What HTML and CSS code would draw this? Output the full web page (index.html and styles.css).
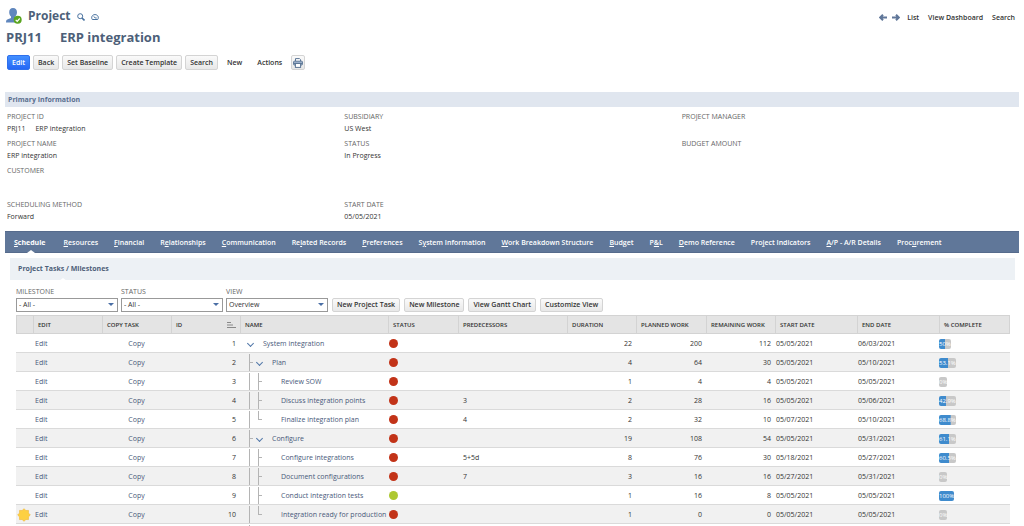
FILE: index.html
```html
<!DOCTYPE html>
<html lang="en">
<head>
<meta charset="utf-8">
<title>Project - ERP integration</title>
<link rel="stylesheet" href="styles.css">
</head>
<body>
<header class="page-head">
  <div class="brand">
    <svg class="person" viewBox="0 0 16 16" aria-hidden="true"><path fill="#5f86bd" d="M7 0c2.700 0 4 1.800 4 4.200 0 1.800-.8 3.300-1.800 4.200v1.400L14 12v2.500H0c0-2.500.7-3 2.500-3.600L5 9.900V8.400C3.900 7.500 3.200 6 3.200 4.200 3.200 1.800 4.400 0 7 0z"/><circle cx="11.700" cy="11.800" r="4" fill="#5aa520"/><path fill="none" stroke="#fff" stroke-width="1.200" d="M9.700 11.900l1.500 1.500 2.500-2.900"/></svg>
    <h1 class="record-type">Project</h1>
    <button class="icon-btn" aria-label="Find"><svg viewBox="0 0 8 8"><circle cx="3.200" cy="3.200" r="2.500"/><path d="M5 5l2.500 2.500" stroke-width="1.600"/></svg></button>
    <button class="icon-btn" aria-label="Dashboard"><svg viewBox="0 0 8 8"><path d="M1.300 6.500C-.2 4.300 1.200 1.600 4 1.600s4.200 2.700 2.700 4.900zM4.200 5L2.800 3.400M4.200 5h1.500"/></svg></button>
  </div>
  <nav class="record-nav">
    <a href="#" aria-label="Previous"><svg class="arrow" viewBox="0 0 8 7"><path d="M8 3.500H1.500M4 .7L1.200 3.500 4 6.300"/></svg></a>
    <a href="#" aria-label="Next"><svg class="arrow" viewBox="0 0 8 7"><path d="M0 3.500h6.500M4 .7l2.800 2.800L4 6.300"/></svg></a>
    <a class="nav-link" href="#">List</a>
    <a class="nav-link" href="#">View Dashboard</a>
    <a class="nav-link" href="#">Search</a>
  </nav>
</header>
<h2 class="record-name"><span>PRJ11</span><span>ERP integration</span></h2>
<div class="toolbar">
  <button class="btn btn-primary">Edit</button>
  <button class="btn">Back</button>
  <button class="btn">Set Baseline</button>
  <button class="btn">Create Template</button>
  <button class="btn">Search</button>
  <button class="btn-plain">New</button>
  <button class="btn-plain">Actions</button>
  <button class="btn btn-print" aria-label="Print"><svg viewBox="0 0 10 10"><path fill="#fff" d="M2.500 3V.6h4l1 1V3"/><rect x=".6" y="3.200" width="8.800" height="3.800" rx=".7" fill="#a9bdd6"/><rect x="2.400" y="5.400" width="5.200" height="4" fill="#fff"/><path d="M.8 5.400h8.400"/></svg></button>
</div>

<section>
  <h3 class="section-title">Primary Information</h3>
  <dl class="fields">
    <div class="field"><dt>PROJECT ID</dt><dd class="id-value"><span>PRJ11</span><span>ERP integration</span></dd></div>
    <div class="field"><dt>SUBSIDIARY</dt><dd>US West</dd></div>
    <div class="field"><dt>PROJECT MANAGER</dt><dd></dd></div>
    <div class="field"><dt>PROJECT NAME</dt><dd>ERP integration</dd></div>
    <div class="field"><dt>STATUS</dt><dd>In Progress</dd></div>
    <div class="field"><dt>BUDGET AMOUNT</dt><dd></dd></div>
    <div class="field field-tall"><dt>CUSTOMER</dt><dd></dd></div>
    <div class="field field-first"><dt>SCHEDULING METHOD</dt><dd>Forward</dd></div>
    <div class="field"><dt>START DATE</dt><dd>05/05/2021</dd></div>
  </dl>
</section>

<nav class="tabs">
  <a class="tab active" href="#"><u>S</u>chedule</a>
  <a class="tab" href="#"><u>R</u>esources</a>
  <a class="tab" href="#"><u>F</u>inancial</a>
  <a class="tab" href="#">R<u>e</u>lationships</a>
  <a class="tab" href="#"><u>C</u>ommunication</a>
  <a class="tab" href="#">Re<u>l</u>ated Records</a>
  <a class="tab" href="#"><u>P</u>references</a>
  <a class="tab" href="#">S<u>y</u>stem Information</a>
  <a class="tab" href="#"><u>W</u>ork Breakdown Structure</a>
  <a class="tab" href="#"><u>B</u>udget</a>
  <a class="tab" href="#">P<u>&amp;</u>L</a>
  <a class="tab" href="#"><u>D</u>emo Reference</a>
  <a class="tab" href="#">Pro<u>j</u>ect Indicators</a>
  <a class="tab" href="#"><u>A</u>/P - A/R Details</a>
  <a class="tab" href="#">Proc<u>u</u>rement</a>
</nav>
<nav class="subtabs"><a class="subtab" href="#">Project Tasks / Milestones</a></nav>

<main class="panel">
  <div class="filters">
    <div class="filter"><label for="milestone">MILESTONE</label><div class="picker"><select id="milestone"><option>- All -</option></select></div></div>
    <div class="filter"><label for="status">STATUS</label><div class="picker"><select id="status"><option>- All -</option></select></div></div>
    <div class="filter"><label for="view">VIEW</label><div class="picker"><select id="view"><option>Overview</option></select></div></div>
    <div class="actions">
      <button class="btn">New Project Task</button>
      <button class="btn">New Milestone</button>
      <button class="btn">View Gantt Chart</button>
      <button class="btn">Customize View</button>
    </div>
  </div>
  <table class="tasks">
    <colgroup><col class="c-mark"><col class="c-std"><col class="c-std"><col class="c-std"><col class="c-name"><col class="c-status"><col class="c-pred"><col class="c-std"><col class="c-status"><col class="c-std"><col class="c-date"><col class="c-date"><col class="c-pct"></colgroup>
    <thead>
      <tr><th></th><th>EDIT</th><th>COPY TASK</th><th><div class="sorted">ID<svg viewBox="0 0 9 8"><path d="M0 1.500h4M0 4h6M0 6.500h9"/></svg></div></th><th>NAME</th><th>STATUS</th><th>PREDECESSORS</th><th>DURATION</th><th>PLANNED WORK</th><th>REMAINING WORK</th><th>START DATE</th><th>END DATE</th><th>% COMPLETE</th></tr>
    </thead>
    <tbody>
      <tr><td></td><td><a class="edit" href="#">Edit</a></td><td class="copy"><a href="#">Copy</a></td><td class="num">1</td><td><div class="name"><i class="slot chevron"></i><a href="#">System integration</a></div></td><td><i class="dot"></i></td><td class="pred"></td><td class="num">22</td><td class="num">200</td><td class="num">112</td><td>05/05/2021</td><td>06/03/2021</td><td><span class="progress" style="--done:50%">50%</span></td></tr>
      <tr><td></td><td><a class="edit" href="#">Edit</a></td><td class="copy"><a href="#">Copy</a></td><td class="num">2</td><td><div class="name"><i class="slot line tee"></i><i class="slot chevron"></i><a href="#">Plan</a></div></td><td><i class="dot"></i></td><td class="pred"></td><td class="num">4</td><td class="num">64</td><td class="num">30</td><td>05/05/2021</td><td>05/10/2021</td><td><span class="progress" style="--done:53.1%">53.1%</span></td></tr>
      <tr><td></td><td><a class="edit" href="#">Edit</a></td><td class="copy"><a href="#">Copy</a></td><td class="num">3</td><td><div class="name"><i class="slot line"></i><i class="slot line tee"></i><i class="slot"></i><a href="#">Review SOW</a></div></td><td><i class="dot"></i></td><td class="pred"></td><td class="num">1</td><td class="num">4</td><td class="num">4</td><td>05/05/2021</td><td>05/05/2021</td><td><span class="progress" style="--done:0%">0%</span></td></tr>
      <tr><td></td><td><a class="edit" href="#">Edit</a></td><td class="copy"><a href="#">Copy</a></td><td class="num">4</td><td><div class="name"><i class="slot line"></i><i class="slot line tee"></i><i class="slot"></i><a href="#">Discuss integration points</a></div></td><td><i class="dot"></i></td><td class="pred">3</td><td class="num">2</td><td class="num">28</td><td class="num">16</td><td>05/05/2021</td><td>05/06/2021</td><td><span class="progress" style="--done:42.9%">42.9%</span></td></tr>
      <tr><td></td><td><a class="edit" href="#">Edit</a></td><td class="copy"><a href="#">Copy</a></td><td class="num">5</td><td><div class="name"><i class="slot line"></i><i class="slot line tee last"></i><i class="slot"></i><a href="#">Finalize integration plan</a></div></td><td><i class="dot"></i></td><td class="pred">4</td><td class="num">2</td><td class="num">32</td><td class="num">10</td><td>05/07/2021</td><td>05/10/2021</td><td><span class="progress" style="--done:68.8%">68.8%</span></td></tr>
      <tr><td></td><td><a class="edit" href="#">Edit</a></td><td class="copy"><a href="#">Copy</a></td><td class="num">6</td><td><div class="name"><i class="slot line tee"></i><i class="slot chevron"></i><a href="#">Configure</a></div></td><td><i class="dot"></i></td><td class="pred"></td><td class="num">19</td><td class="num">108</td><td class="num">54</td><td>05/05/2021</td><td>05/31/2021</td><td><span class="progress" style="--done:61.1%">61.1%</span></td></tr>
      <tr><td></td><td><a class="edit" href="#">Edit</a></td><td class="copy"><a href="#">Copy</a></td><td class="num">7</td><td><div class="name"><i class="slot line"></i><i class="slot line tee"></i><i class="slot"></i><a href="#">Configure integrations</a></div></td><td><i class="dot"></i></td><td class="pred">5+5d</td><td class="num">8</td><td class="num">76</td><td class="num">30</td><td>05/18/2021</td><td>05/27/2021</td><td><span class="progress" style="--done:60.5%">60.5%</span></td></tr>
      <tr><td></td><td><a class="edit" href="#">Edit</a></td><td class="copy"><a href="#">Copy</a></td><td class="num">8</td><td><div class="name"><i class="slot line"></i><i class="slot line tee"></i><i class="slot"></i><a href="#">Document configurations</a></div></td><td><i class="dot"></i></td><td class="pred">7</td><td class="num">3</td><td class="num">16</td><td class="num">16</td><td>05/27/2021</td><td>05/31/2021</td><td><span class="progress" style="--done:0%">0%</span></td></tr>
      <tr><td></td><td><a class="edit" href="#">Edit</a></td><td class="copy"><a href="#">Copy</a></td><td class="num">9</td><td><div class="name"><i class="slot line"></i><i class="slot line tee"></i><i class="slot"></i><a href="#">Conduct integration tests</a></div></td><td><i class="dot dot-ok"></i></td><td class="pred"></td><td class="num">1</td><td class="num">16</td><td class="num">8</td><td>05/05/2021</td><td>05/05/2021</td><td><span class="progress" style="--done:100%">100%</span></td></tr>
      <tr><td><svg class="milestone" viewBox="0 0 14 14" aria-label="Milestone"><path fill="#fdd042" stroke="#f2b632" stroke-width=".6" d="M7 .7l1.900 1.800 2.600-.1-.1 2.600L13.300 7l-1.900 1.900.1 2.700-2.600-.1L7 13.300l-1.900-1.800-2.600.1.1-2.700L.7 7l1.900-2-.1-2.600 2.600.1z"/></svg></td><td><a class="edit" href="#">Edit</a></td><td class="copy"><a href="#">Copy</a></td><td class="num">10</td><td><div class="name"><i class="slot line"></i><i class="slot line tee last"></i><i class="slot"></i><a href="#">Integration ready for production</a></div></td><td><i class="dot"></i></td><td class="pred"></td><td class="num">1</td><td class="num">0</td><td class="num">0</td><td>05/05/2021</td><td>05/05/2021</td><td><span class="progress" style="--done:0%">0%</span></td></tr>
    </tbody>
  </table>
  <div class="tree-tail"></div>
</main>
</body>
</html>
```
FILE: styles.css
```css
* { box-sizing: border-box; }
body {
  margin: 0;
  padding: 6px 5px 0;
  background: #fff;
  color: #333;
  font: 7px/12px "Open Sans", "Noto Sans", sans-serif;
  overflow: hidden;
}
a { color: inherit; text-decoration: none; }
button, select { font: inherit; color: inherit; }
h1, h2, h3, dl, dd { margin: 0; }
svg { display: block; }

.page-head { display: flex; justify-content: space-between; align-items: center; height: 20px; padding: 0 4px 0 1px; }
.brand { display: flex; align-items: center; gap: 6px; }
.person { width: 16px; height: 16px; }
.record-type { color: #4d5f79; font-size: 12px; line-height: 20px; font-weight: 700; }
.icon-btn { border: 0; padding: 2px 0 0; background: none; }
.icon-btn svg { width: 8px; height: 8px; fill: none; stroke: #49729f; stroke-width: 1; }
.record-nav { display: flex; align-items: center; gap: 5px; padding-top: 3px; }
.arrow { width: 8px; height: 7px; fill: none; stroke: #607799; stroke-width: 2; }
.nav-link { font-weight: 600; margin-left: 2px; }
.nav-link + .nav-link { margin-left: 4px; }

.record-name { display: flex; gap: 18px; padding: 1px 0 0 1px; color: #4d5f79; font-size: 13px; line-height: 20px; font-weight: 700; margin-bottom: 8px; }

.toolbar { display: flex; gap: 3px; padding-left: 2px; margin-bottom: 22px; }
.btn {
  height: 15px;
  padding: 0 4px;
  border: 1px solid #d4d4d4;
  border-radius: 2px;
  background: linear-gradient(#fafafa, #e8e8e8);
  font-weight: 600;
  line-height: 12px;
  white-space: nowrap;
}
.btn-primary { border-color: #2f70ec; background: linear-gradient(#4390ff, #2667f5); color: #fff; }
.btn-plain { border: 0; padding: 0 6px; background: none; font-weight: 600; line-height: 12px; }
.btn-print { padding: 0 1px; }
.btn-print svg { width: 10px; height: 10px; stroke: #5c7694; stroke-width: 1; }

.section-title { background: #e0e6ef; color: #5a6f8f; font-size: 7px; line-height: 15px; font-weight: 700; padding-left: 3px; margin-bottom: 4px; }
.fields { display: grid; grid-template-columns: repeat(3, 1fr); row-gap: 3px; padding-left: 2px; margin-bottom: 8px; }
.field { min-height: 24px; }
.field dt, .filter label { color: #666; }
.field-tall { min-height: 31px; }
.field-first { grid-column: 1; }
.id-value { display: flex; gap: 10px; }

.tabs { display: flex; background: #607799; border: 1px solid #566b8c; border-width: 1px 0; margin-bottom: 5px; padding-left: 1px; white-space: nowrap; }
.tab { padding: 1px 8px 0; color: #fff; font-weight: 600; line-height: 19px; position: relative; }
.tab.active { font-weight: 700; padding-right: 10px; }
.tab.active::after, .subtab::after {
  content: "";
  position: absolute;
  left: 50%;
  bottom: -1px;
  margin-left: -4px;
  border: 4px solid transparent;
  border-top: 0;
  border-bottom: 3px solid #fff;
}
.subtabs { display: flex; background: #edf1f5; margin: 0 4px 0 5px; padding-left: 8px; }
.subtab { position: relative; color: #4d5f79; font-weight: 700; line-height: 22px; }

.panel { padding: 6px 10px 0 11px; }
.filters { display: flex; gap: 3px; align-items: flex-end; margin-bottom: 3px; }
.filter { flex: 0 1 102px; }
.filter label { display: block; line-height: 12px; }
.picker { position: relative; }
.picker select { display: block; width: 100%; height: 14px; padding: 0 2px; border: 1px solid #999; border-radius: 0; background: #fff; appearance: none; }
.picker::after { content: ""; position: absolute; right: 4px; top: 5px; border: 3px solid transparent; border-top-color: #4a6fa5; border-bottom: 0; pointer-events: none; }
.actions { display: flex; gap: 4px; margin-left: 1px; }
.actions .btn { height: 14px; line-height: 12px; }

.tasks { width: 100%; table-layout: fixed; border-collapse: separate; border-spacing: 0; }
.c-mark { width: 17px; }
.c-std { width: 69px; }
.c-name { width: 148px; }
.c-status { width: 70px; }
.c-pred { width: 109px; }
.c-date { width: 82px; }
.c-pct { width: 71px; }
.tasks th {
  height: 19px;
  padding: 0 4px;
  background: #e4e4e4;
  border: solid #d3d3d3;
  border-width: 1px 0 1px 1px;
  font-size: 6px;
  font-weight: 600;
  text-align: left;
  white-space: nowrap;
}
.tasks th:last-child { border-right-width: 1px; }
.sorted { display: flex; justify-content: space-between; align-items: center; }
.sorted svg { width: 9px; height: 8px; fill: none; stroke: #888; stroke-width: 1; }
.tasks td { height: 19px; padding: 1px 1px 0; border-bottom: 1px solid #dadada; white-space: nowrap; }
.tasks td:last-child { padding-left: 0; }
.tasks tbody tr:nth-child(even) { background: #f1f1f1; }
.tasks td a { color: #48597a; }
.edit { padding-left: 1px; }
.tasks .copy { text-align: center; }
.tasks .num { text-align: right; padding-right: 4px; }
.tasks .pred { padding-left: 5px; }
.name { display: flex; align-items: center; height: 17px; padding-left: 5px; }
.name a { padding-left: 8px; }
.slot { position: relative; flex: none; width: 9px; height: 100%; }
.line::before { content: ""; position: absolute; left: 3px; top: 0; bottom: 0; border-left: 1px solid #b4b4b4; }
.tee::after { content: ""; position: absolute; left: 3px; top: 8px; width: 4px; border-top: 1px solid #b4b4b4; }
.last::before { bottom: 8px; }
.chevron::before { content: ""; position: absolute; left: 2px; top: 6px; width: 4px; height: 4px; border: solid #5077a8; border-width: 0 1px 1px 0; transform: rotate(45deg); }
.dot { display: block; width: 9px; height: 9px; border-radius: 50%; background: #c23318; }
.dot-ok { background: #adc832; }
.progress {
  display: inline-block;
  border-radius: 2px;
  background: linear-gradient(#3f8bcd, #3f8bcd) 0 0 / var(--done) 100% no-repeat #c8c8c8;
  color: #fff;
  font-size: 6px;
  line-height: 10px;
  vertical-align: middle;
}
.milestone { width: 14px; height: 14px; }
.tree-tail { height: 4px; margin: 1px 0 0 233px; border-left: 1px solid #b4b4b4; }
```
